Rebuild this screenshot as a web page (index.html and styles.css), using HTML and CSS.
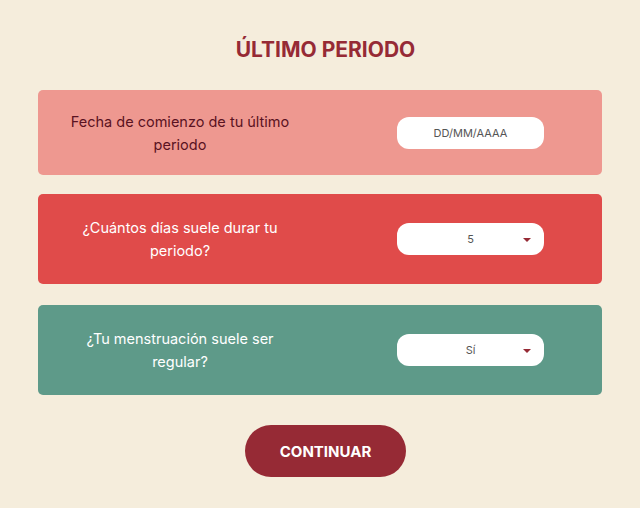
FILE: index.html
```html
<!DOCTYPE html>
<html lang="es">
<head>
<meta charset="utf-8">
<title>Último periodo</title>
<link rel="stylesheet" href="styles.css">
</head>
<body>
<main class="page">
  <h1 class="title">ÚLTIMO PERIODO</h1>
  <section class="card card--light">
    <p class="label">Fecha de comienzo de tu último periodo</p>
    <div class="field"><span class="field-text">DD/MM/AAAA</span></div>
  </section>
  <section class="card card--red">
    <p class="label">¿Cuántos días suele durar tu periodo?</p>
    <div class="field field--select"><span class="field-text">5</span><span class="caret"></span></div>
  </section>
  <section class="card card--green">
    <p class="label">¿Tu menstruación suele ser regular?</p>
    <div class="field field--select"><span class="field-text">Sí</span><span class="caret"></span></div>
  </section>
  <div class="actions">
    <button class="btn">CONTINUAR</button>
  </div>
</main>
</body>
</html>
```
FILE: styles.css
```css
* { box-sizing: border-box; }
html, body { margin: 0; padding: 0; }
body {
  background: #f5eddc;
  font-family: Inter, "Noto Sans", sans-serif;
  width: 640px;
  height: 508px;
  overflow: hidden;
}
.page {
  width: 564px;
  margin: 0 auto;
  padding-top: 37px;
  display: flex;
  flex-direction: column;
}
.title {
  margin: 0 0 28px;
  padding-left: 11px;
  text-align: center;
  font-size: 21px;
  line-height: 25px;
  font-weight: 700;
  color: #962a35;
}
.card {
  display: flex;
  align-items: center;
  border-radius: 5px;
  padding: 0 58px 0 27px;
}
.card--light { background: #ee9890; height: 85px; color: #5a1222; margin-bottom: 19px; }
.card--red { background: #e04b4a; height: 90px; color: #ffffff; margin-bottom: 21px; }
.card--green { background: #5e9a89; height: 90px; color: #ffffff; }
.label {
  margin: 0;
  width: 230px;
  text-align: center;
  font-size: 14.5px;
  line-height: 23px;
  font-weight: 400;
}
.field {
  margin-left: auto;
  width: 147px;
  height: 32px;
  background: #ffffff;
  border-radius: 12px;
  display: flex;
  align-items: center;
  justify-content: center;
  position: relative;
}
.field-text {
  font-size: 11px;
  color: #555555;
}
.caret {
  position: absolute;
  right: 13px;
  top: 15px;
  width: 0;
  height: 0;
  border-left: 4px solid transparent;
  border-right: 4px solid transparent;
  border-top: 4px solid #962a35;
}
.actions {
  display: flex;
  justify-content: center;
  margin-top: 30px;
  padding-left: 11px;
}
.btn {
  width: 161px;
  height: 52px;
  border: none;
  border-radius: 26px;
  background: #962a35;
  color: #ffffff;
  font-family: Inter, "Noto Sans", sans-serif;
  font-size: 15px;
  font-weight: 700;
  padding: 0;
}
```
